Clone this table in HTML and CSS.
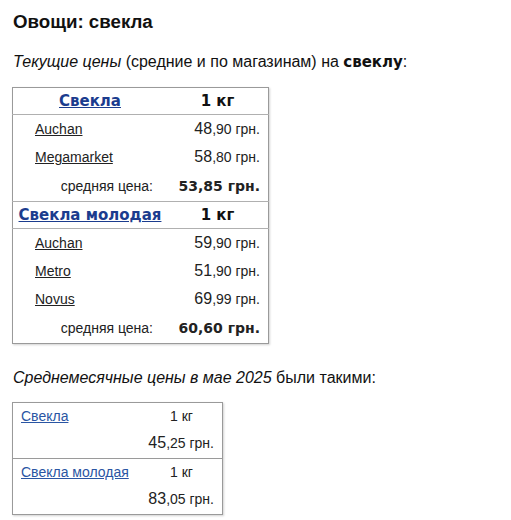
FILE: index.html
```html
<!DOCTYPE html>
<html lang="ru">
<head>
<meta charset="utf-8">
<link rel="stylesheet" href="styles.css">
</head>
<body>
<div class="page">
  <h1 class="title">Овощи: свекла</h1>
  <p class="intro"><i>Текущие цены</i> (средние и по магазинам) на <b>свеклу</b>:</p>

  <table class="prices">
    <tr class="head">
      <th class="name"><a href="#">Свекла</a></th>
      <th class="unit">1 кг</th>
    </tr>
    <tr class="shop first">
      <td class="store"><a href="#">Auchan</a></td>
      <td class="price"><span class="big">48</span>,90 грн.</td>
    </tr>
    <tr class="shop">
      <td class="store"><a href="#">Megamarket</a></td>
      <td class="price"><span class="big">58</span>,80 грн.</td>
    </tr>
    <tr class="avg">
      <td class="avg-label">средняя цена:</td>
      <td class="avg-price">53,85 грн.</td>
    </tr>
    <tr class="head">
      <th class="name"><a href="#">Свекла молодая</a></th>
      <th class="unit">1 кг</th>
    </tr>
    <tr class="shop first">
      <td class="store"><a href="#">Auchan</a></td>
      <td class="price"><span class="big">59</span>,90 грн.</td>
    </tr>
    <tr class="shop">
      <td class="store"><a href="#">Metro</a></td>
      <td class="price"><span class="big">51</span>,90 грн.</td>
    </tr>
    <tr class="shop">
      <td class="store"><a href="#">Novus</a></td>
      <td class="price"><span class="big">69</span>,99 грн.</td>
    </tr>
    <tr class="avg">
      <td class="avg-label">средняя цена:</td>
      <td class="avg-price">60,60 грн.</td>
    </tr>
  </table>

  <p class="intro second"><i>Среднемесячные цены в мае 2025</i> были такими:</p>

  <table class="monthly">
    <tr class="m-top">
      <td class="m-name"><a href="#">Свекла</a></td>
      <td class="m-unit">1 кг</td>
    </tr>
    <tr class="m-bottom">
      <td></td>
      <td class="m-price"><span class="big">45</span>,25 грн.</td>
    </tr>
    <tr class="m-top sep">
      <td class="m-name"><a href="#">Свекла молодая</a></td>
      <td class="m-unit">1 кг</td>
    </tr>
    <tr class="m-bottom">
      <td></td>
      <td class="m-price"><span class="big">83</span>,05 грн.</td>
    </tr>
  </table>
</div>
</body>
</html>
```

FILE: styles.css
```css
html, body {
  margin: 0;
  padding: 0;
  background: #fff;
}
body {
  font-family: "Liberation Sans", Arial, sans-serif;
  color: #111;
}
.page {
  padding: 10px 12px;
}
.title {
  margin: 0 0 0 1px;
  font-size: 18.7px;
  font-weight: bold;
  line-height: 24px;
  color: #111;
}
.intro {
  margin: 18px 0 0 1px;
  font-size: 16px;
  line-height: 20px;
  color: #111;
}
.intro b {
  font-family: "DejaVu Sans", Verdana, sans-serif;
  font-size: 15px;
}
.intro.second {
  margin-top: 24px;
}
table {
  border-collapse: collapse;
  border: 1px solid #9a9a9a;
  box-shadow: 1px 1px 2px rgba(0,0,0,0.18);
}
td, th {
  white-space: nowrap;
}
.prices {
  margin-top: 15px;
  width: 257px;
}
.prices th {
  font-family: "DejaVu Sans", Verdana, sans-serif;
  font-size: 15px;
  font-weight: bold;
  height: 26px;
  padding: 0;
  text-align: center;
  color: #111;
}
.prices .head {
  border-bottom: 1px solid #b0b0b0;
}
.prices .avg + .head {
  border-top: 1px solid #b0b0b0;
}
.prices .name {
  width: 154px;
}
.prices .name a {
  color: #1b3c8e;
}
.prices td {
  height: 28px;
  padding: 0;
  font-size: 14px;
  color: #222;
}
.prices .avg td {
  height: 30px;
}
.store {
  padding-left: 22px !important;
}
.store a {
  color: #222;
}
.price {
  text-align: right;
  padding-right: 8px !important;
}
.big {
  font-size: 16px;
}
.avg-label {
  text-align: right;
  color: #333;
  padding-right: 14px !important;
}
.avg-price {
  text-align: right;
  padding-right: 8px !important;
  font-family: "DejaVu Sans", Verdana, sans-serif;
  font-weight: bold;
  font-size: 16px;
  color: #111;
}
.monthly {
  margin-top: 14px;
  width: 211px;
}
.monthly td {
  padding: 0;
  font-size: 14px;
  color: #222;
}
.monthly .m-top td {
  height: 25px;
}
.monthly .m-bottom td {
  height: 30px;
}
.m-name {
  padding-left: 8px !important;
  width: 120px;
}
.m-name a {
  color: #2a55a3;
}
.m-unit {
  text-align: center;
}
.m-price {
  text-align: right;
  padding-right: 8px !important;
}
.monthly .sep {
  border-top: 1px solid #9a9a9a;
}
```
